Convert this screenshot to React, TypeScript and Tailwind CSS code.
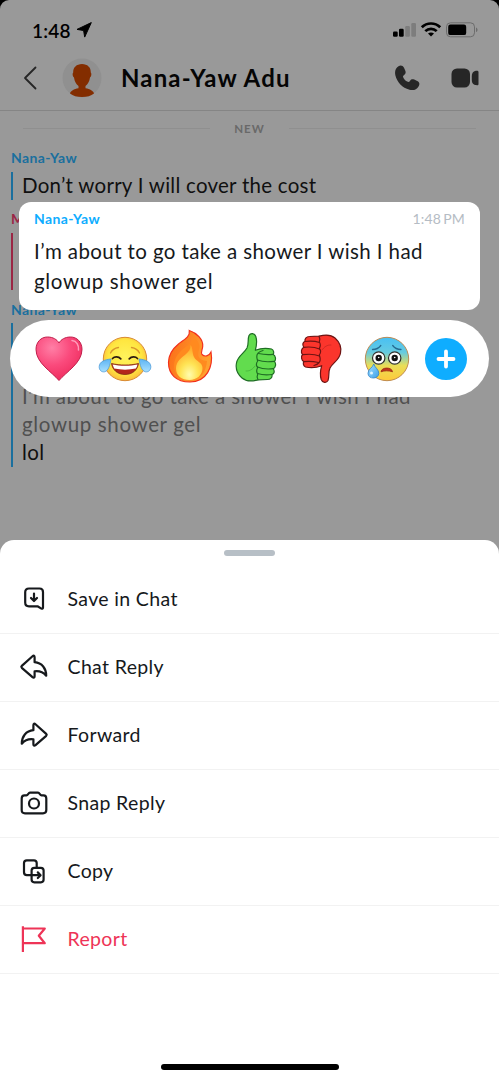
import { ReactNode } from "react";

type Action = { label: string; icon: ReactNode; danger?: boolean };

const HeartEmoji = () => (
  <svg viewBox="0 0 54 60" className="w-[54px] h-[60px]">
    <defs>
      <radialGradient id="heart" cx="0.35" cy="0.25" r="0.8">
        <stop offset="0" stopColor="#ff7fa6" />
        <stop offset="0.5" stopColor="#fa4a7c" />
        <stop offset="1" stopColor="#ee2a5c" />
      </radialGradient>
    </defs>
    <path
      d="M27 52.500C20 44 4 35 4 21.500C4 14 9 9 15.500 9C21 9 25 11.500 27 15C29 11.500 33 9 38.500 9C45 9 50 14 50 21.500C50 35 34 44 27 52.500Z"
      fill="url(#heart)"
      stroke="#c01f4b"
      strokeWidth="1"
    />
    <path d="M40 12.500C44.500 13 47 17 46.500 22" fill="none" stroke="#ff9cba" strokeWidth="1.500" strokeLinecap="round" />
  </svg>
);

const JoyEmoji = () => (
  <svg viewBox="0 0 54 60" className="w-[54px] h-[60px]">
    <defs>
      <radialGradient id="joy" cx="0.5" cy="0.45" r="0.55">
        <stop offset="0" stopColor="#fff35c" />
        <stop offset="0.7" stopColor="#ffe640" />
        <stop offset="1" stopColor="#fbbd3c" />
      </radialGradient>
      <linearGradient id="tear" x1="0" y1="0" x2="0" y2="1">
        <stop offset="0" stopColor="#5db4f3" />
        <stop offset="1" stopColor="#a8e0ff" />
      </linearGradient>
    </defs>
    <circle cx="27" cy="31" r="21.700" fill="url(#joy)" stroke="#d98a32" />
    <g fill="none" stroke="#d9962b" strokeWidth="1.300" strokeLinecap="round">
      <path d="M12.500 25C14 22 17 20 20.500 19.500" />
      <path d="M41.500 25C40 22 37 20 33.500 19.500" />
    </g>
    <g fill="none" stroke="#2e1a10" strokeWidth="1.700" strokeLinecap="round">
      <path d="M14.500 30.500C16.500 28.300 20.500 28.300 22.800 30.800" />
      <path d="M39.500 30.500C37.500 28.300 33.500 28.300 31.200 30.800" />
    </g>
    <path d="M13.500 35.500C22 37.500 32 37.500 40.500 35.500C39.500 42 34.500 46.500 27 46.500C19.500 46.500 14.500 42 13.500 35.500Z" fill="#b3261c" stroke="#7d2a14" strokeWidth="0.800" />
    <path d="M14.500 36.500C22 38.300 32 38.300 39.500 36.500C39 38.500 38.500 39.500 37.800 40.500C31 42 23 42 16.200 40.500Z" fill="#fff" />
    <path d="M13 31C7 31.500 1.500 33.500 1.200 38.500C1 42 3.500 44.300 6.500 43.800C10.500 43 12 37 13 31Z" fill="url(#tear)" stroke="#4d9bd9" strokeWidth="0.800" />
    <path d="M41 31C47 31.500 52.500 33.500 52.800 38.500C53 42 50.500 44.300 47.500 43.800C43.500 43 42 37 41 31Z" fill="url(#tear)" stroke="#4d9bd9" strokeWidth="0.800" />
  </svg>
);

const FireEmoji = () => (
  <svg viewBox="0 0 54 60" className="w-[54px] h-[60px]">
    <defs>
      <linearGradient id="flame" x1="0" y1="0" x2="1" y2="0.3">
        <stop offset="0" stopColor="#fb6a17" />
        <stop offset="1" stopColor="#ffa02e" />
      </linearGradient>
      <radialGradient id="core" cx="0.5" cy="0.85" r="0.75">
        <stop offset="0" stopColor="#fffcae" />
        <stop offset="0.45" stopColor="#ffe354" />
        <stop offset="1" stopColor="#ffab2c" />
      </radialGradient>
    </defs>
    <path
      d="M26.300 2.500C34 5 40.500 11.500 39.700 18.500C39.300 22 37.500 24.500 39 26.500C41.500 29 46 28.500 48 24C50.500 39 43.500 54 27 54C13 54 5.500 46 5.500 34.500C5.500 26.500 10 20.500 15.500 16C20.500 12 27.500 9 26.300 2.500Z"
      fill="url(#flame)"
      stroke="#f2301c"
      strokeWidth="1.200"
    />
    <path d="M11 38C11 29 17 23 24 18C28 15 29.500 12 30 9C35 12 37.500 17 36 21.500C34 28 35 32 44 33C43 44 38 51.500 27 51.500C17 51.500 11 46 11 38Z" fill="#ff8a1f" />
    <path d="M27.500 17C30 20 29 25 31 29C33.500 34 39.500 34 39.500 40C39.500 47 34 52 26.500 52C18.500 52 13 47.500 13 40.500C13 33 18.500 30 22.500 26.500C26 23.500 27.800 21 27.500 17Z" fill="url(#core)" />
  </svg>
);

function ThumbEmoji(props: { down?: boolean }) {
  const { down } = props;
  const fill = down ? "#fb352c" : "#62dc4e";
  const line = down ? "#6d1413" : "#1f6d24";
  return (
    <svg viewBox="0 0 54 60" className={down ? "w-[54px] h-[60px] rotate-180" : "w-[54px] h-[60px]"}>
      <g fill={fill} stroke={line} strokeWidth="1.200" strokeLinejoin="round" strokeLinecap="round">
        <path d="M20 7.500C21.500 4.800 25.500 5 26.800 8.500C28.300 13 27.500 18 26.300 22.300C32 20 38 20 42.500 21C45 22 45 25 44.200 26.500C46.500 27.500 47.300 31.500 45.500 33.500C47.500 36 46.500 39.500 44.300 40.800C46 43.500 45 46 43 46.500C43.500 49.500 41.500 51.500 38.500 51.500L29 51.800C23 53.500 17 53.500 13 50C8.500 46 6.500 40 7.500 35C8.500 28 15 25.500 18 20C20 16 18.500 11 20 7.500Z" />
        <path d="M29.500 25.500C34 26.500 40 26.800 44 26.300" fill="none" />
        <path d="M28.500 32C33 33.800 40 34 45.300 33.300" fill="none" />
        <path d="M28.500 39C33 41 39 41.300 44.300 40.700" fill="none" />
        <path d="M28.500 45.500C33 47 38 47.200 43 46.500" fill="none" />
        <path d="M34 22.500C30.500 23.500 27.500 26 27.800 29C28 31 28.300 31.500 28.700 33C26.800 35.500 27 37.500 28.700 39.500C27.300 42 27.300 44 28.700 46C27.800 48 28 50 29 51.800" fill="none" />
        <path d="M17 43C20.500 43.500 24 41 26 38" fill="none" strokeWidth="0.600" opacity="0.500" />
      </g>
    </svg>
  );
}

const AnxiousEmoji = () => (
  <svg viewBox="0 0 54 60" className="w-[54px] h-[60px]">
    <defs>
      <linearGradient id="anxious" x1="0" y1="0" x2="0" y2="1">
        <stop offset="0" stopColor="#48c0f4" />
        <stop offset="0.350" stopColor="#66cbe0" />
        <stop offset="0.650" stopColor="#e9de57" />
        <stop offset="1" stopColor="#ffc93a" />
      </linearGradient>
      <linearGradient id="drop" x1="0" y1="0" x2="1" y2="1">
        <stop offset="0" stopColor="#a5e0ff" />
        <stop offset="1" stopColor="#3b9fe8" />
      </linearGradient>
    </defs>
    <circle cx="27" cy="31" r="21.700" fill="url(#anxious)" stroke="#b98145" strokeWidth="0.900" />
    <g fill="none" stroke="#266a91" strokeWidth="1.300" strokeLinecap="round">
      <path d="M12.500 21.500C16 21.500 19 20 20.800 17.500" />
      <path d="M41 21.500C37.500 21.500 34.500 20 32.700 17.500" />
    </g>
    <g fill="#fff" stroke="#30312e" strokeWidth="1.200">
      <circle cx="18.700" cy="30" r="6.200" />
      <circle cx="34.700" cy="30" r="6.200" />
    </g>
    <circle cx="18.700" cy="30" r="3.200" fill="#111" />
    <circle cx="34.700" cy="30" r="3.200" fill="#111" />
    <circle cx="18.700" cy="29.500" r="0.800" fill="#fff" />
    <circle cx="34.700" cy="29.500" r="0.800" fill="#fff" />
    <path d="M21 43.800C21.500 38.800 32 38.800 32.500 43.800C29 42.500 24.500 42.500 21 43.800Z" fill="#c0361d" stroke="#992913" strokeWidth="0.800" strokeLinejoin="round" />
    <path d="M13.800 36C15 40 19 41.500 18.800 45.500C18.600 48.300 16.300 50 13.300 50C10.300 50 8 48.300 8 45.300C8 41 12.500 40 13.800 36Z" fill="url(#drop)" stroke="#2e83c9" strokeWidth="0.800" />
    <circle cx="11.500" cy="45" r="1.500" fill="#e2f6ff" />
  </svg>
);

const reactions = [
  <HeartEmoji />,
  <JoyEmoji />,
  <FireEmoji />,
  <ThumbEmoji />,
  <ThumbEmoji down />,
  <AnxiousEmoji />,
];

function ActionIcon(props: { children: ReactNode }) {
  return (
    <svg
      viewBox="0 0 30 30"
      className="w-[30px] h-[30px]"
      fill="none"
      stroke="currentColor"
      strokeWidth="2.200"
      strokeLinejoin="round"
      strokeLinecap="round"
    >
      {props.children}
    </svg>
  );
}

const actions: Action[] = [
  {
    label: "Save in Chat",
    icon: (
      <ActionIcon>
        <path d="M10 4.500H20.500C22.700 4.500 24 5.800 24 8V23.500C24 24.600 23.300 25 22.400 24.600L18.500 22.300H10C7.500 22.300 6.200 21 6.200 18.500V8.300C6.200 5.800 7.500 4.500 10 4.500Z" />
        <path d="M15 9.500V16.800M12 14L15 17L18 14" />
      </ActionIcon>
    ),
  },
  {
    label: "Chat Reply",
    icon: (
      <ActionIcon>
        <path d="M13.500 4.300L2.800 13.900C2.200 14.500 2.200 15.200 2.800 15.800L13.500 25.200C14.700 26.200 15.600 25.600 15.600 24.300V19.300C20.500 18.700 24.500 20.500 27.200 23.700C27.300 16.500 23 10.800 15.600 10.200V5.200C15.600 3.700 14.700 3.200 13.500 4.300Z" />
      </ActionIcon>
    ),
  },
  {
    label: "Forward",
    icon: (
      <ActionIcon>
        <path d="M16.500 4.300L27.200 13.900C27.800 14.500 27.800 15.200 27.200 15.800L16.500 25.200C15.300 26.200 14.400 25.600 14.400 24.300V19.300C9.500 18.700 5.500 20.500 2.800 23.700C2.700 16.500 7 10.800 14.400 10.200V5.200C14.400 3.700 15.300 3.200 16.500 4.300Z" />
      </ActionIcon>
    ),
  },
  {
    label: "Snap Reply",
    icon: (
      <ActionIcon>
        <path d="M5.500 7.300H7.500C9 7.300 9.300 4.600 11 4.600H19C20.700 4.600 21 7.300 22.500 7.300H24.500C26.500 7.300 27.300 8.500 27.300 10.500V22C27.300 24.300 26.300 25.300 24 25.300H6C3.700 25.300 2.700 24.300 2.700 22V10.500C2.700 8.500 3.500 7.300 5.500 7.300Z" />
        <circle cx="15" cy="15.500" r="5" />
      </ActionIcon>
    ),
  },
  {
    label: "Copy",
    icon: (
      <ActionIcon>
        <path d="M17.700 11.300V7C17.700 5.300 16.700 4.300 15 4.300H7.800C6.100 4.300 5 5.300 5 7V16.300C5 18.100 6.100 19.200 7.800 19.200H20.800" />
        <rect x="12.600" y="11.800" width="12" height="14.500" rx="2.700" />
        <path d="M18.800 16.400L21.600 19.200L18.800 22" />
      </ActionIcon>
    ),
  },
  {
    label: "Report",
    danger: true,
    icon: (
      <ActionIcon>
        <path d="M3.900 2.300V28M3.900 4.500H25.800L19.800 11.800L25.800 19.200H3.900" strokeLinecap="butt" strokeLinejoin="round" />
      </ActionIcon>
    ),
  },
];

function StatusBar() {
  return (
    <div className="h-[50px] pt-[10px] pl-8 pr-[20px] flex items-center justify-between text-black">
      <div className="flex items-center">
        <span className="w-[40px] text-[19px] leading-none font-semibold tracking-[0.200px] whitespace-nowrap">1:48</span>
        <svg viewBox="0 0 16 16" className="w-4 h-4 ml-1">
          <path d="M15.300 0.600L8.700 15.100L7.600 8.500L1 7.400Z" fill="#000" stroke="#000" strokeLinejoin="round" />
        </svg>
      </div>
      <svg viewBox="0 0 87 18" className="w-[87px] h-[18px]">
        <rect x="1" y="10.500" width="4.700" height="5.300" rx="1.200" />
        <rect x="7" y="7.800" width="4.700" height="8" rx="1.200" />
        <rect x="13.200" y="5" width="4.700" height="10.800" rx="1.200" fill="#7d7d7d" />
        <rect x="19.300" y="2" width="4.700" height="13.800" rx="1.200" fill="#7d7d7d" />
        <g fill="none" stroke="#000" strokeWidth="2.700">
          <path d="M29.800 6.300C35 1.200 43 1.200 48.200 6.300" />
          <path d="M33.300 10.100C36.500 7 41.500 7 44.700 10.100" />
        </g>
        <path d="M39 15.600L36 12.600C37.600 11.100 40.400 11.100 42 12.600Z" />
        <rect x="54.500" y="1.800" width="28" height="14" rx="4" fill="none" stroke="#6c6c6c" />
        <rect x="56.200" y="3.500" width="18" height="10.600" rx="2.200" />
        <path d="M84 6.500C86 7.300 86 10.300 84 11.100Z" fill="#6c6c6c" />
      </svg>
    </div>
  );
}

function ChatHeader() {
  return (
    <div className="h-[61px] pb-[5px] border-b border-[#858585] flex items-center">
      <svg viewBox="0 0 14 24" className="w-[14px] h-6 ml-[23px]" fill="none" stroke="#262626" strokeWidth="1.800">
        <path d="M12.500 1.500L2 12L12.500 22.500" strokeLinecap="round" strokeLinejoin="round" />
      </svg>
      <svg viewBox="0 0 40 40" className="w-10 h-10 ml-[25px]">
        <circle cx="20" cy="20" r="19.500" fill="#909090" />
        <path
          d="M20 6C25.500 6 29 9.500 28.800 14.500C29.800 15.500 29.500 18.500 28 19.500C27.500 23.500 25.800 26 23.500 28V30.300C28 31 31.500 33 32 35.500C29 38 25 39 20 39C15 39 11 38 8 35.500C8.500 33 12 31 16.500 30.300V28C14.200 26 12.500 23.500 12 19.500C10.500 18.500 10.200 15.500 11.200 14.500C11 9.500 14.500 6 20 6Z"
          fill="#832d00"
        />
      </svg>
      <h1 className="ml-[19px] text-[24px] leading-none font-bold tracking-[1.150px] text-[#050505] whitespace-nowrap">
        Nana-Yaw Adu
      </h1>
      <svg viewBox="0 0 26 26" className="w-[26px] h-[26px] ml-auto" fill="#262626">
        <path d="M4.500 1.200C6.500 -0.200 8.800 0.400 10 2.800L11.300 5.800C12 7.500 11.600 8.900 10.200 9.900C8.800 10.900 8.700 11.600 9.500 12.900C10.600 14.600 11.700 15.700 13.200 16.500C14.500 17.200 15.200 17 16.100 15.700C17.100 14.300 18.500 13.900 20.200 14.600L23.200 16C25.500 17.100 25.900 19 24.700 21.200C22.700 24.800 19.300 25.700 15.500 24.700C8.300 22.600 3.200 17.300 1.400 10.400C0.500 6.600 1.400 3.300 4.500 1.200Z" />
      </svg>
      <svg viewBox="0 0 28 20" className="w-7 h-5 ml-[31px] mr-5" fill="#262626">
        <rect x="0.500" y="0.500" width="18.500" height="19" rx="5.500" />
        <path d="M20.800 8C20.800 4.500 23 2.800 26 2.800C27 2.800 27.500 3.300 27.500 4.300V15.700C27.500 16.700 27 17.200 26 17.200C23 17.200 20.800 15.500 20.800 12Z" />
      </svg>
    </div>
  );
}

function Conversation() {
  return (
    <div className="px-[11px]">
      <div className="h-[34px] pl-3 pr-3 flex items-center">
        <div className="h-px w-[187px] bg-[#8f8f8f]" />
        <span className="flex-1 pt-px text-center text-[11.500px] font-bold tracking-[1px] text-[#696969]">NEW</span>
        <div className="h-px w-[187px] bg-[#8f8f8f]" />
      </div>
      <p className="mt-[4px] h-[17px] text-[14px] leading-[17px] font-bold tracking-[0.400px] text-[#1a6f9e]">Nana-Yaw</p>
      <div className="mt-[6px] h-7 border-l-[2.500px] border-[#1a6f9e] pl-[9px] text-[20.500px] leading-[26px] tracking-[0.260px] text-[#101010]">
        Don’t worry I will cover the cost
      </div>
      <p className="mt-[10px] h-[17px] text-[14px] leading-[17px] font-bold tracking-[0.400px] text-[#9b2645]">ME</p>
      <div className="mt-[6px] h-[57px] border-l-[2.500px] border-[#9b2645]" />
      <p className="mt-[11px] h-[17px] text-[14px] leading-[17px] font-bold tracking-[0.400px] text-[#1a6f9e]">Nana-Yaw</p>
      <div className="mt-[5px] h-[144px] pt-[59px] border-l-[2.500px] border-[#1a6f9e] pl-[9px] text-[20.500px] leading-[28px] tracking-[0.400px] text-[#505050]">
        <p className="whitespace-nowrap">I’m about to go take a shower I wish I had</p>
        <p className="tracking-[0.650px]">glowup shower gel</p>
        <p className="text-[#101010]">lol</p>
      </div>
    </div>
  );
}

function FocusedMessage() {
  return (
    <div className="absolute left-[19px] top-[202px] w-[461px] h-[108px] rounded-xl bg-white px-[15px] pt-[8px]">
      <div className="flex justify-between text-[14px] leading-[17px]">
        <span className="font-bold tracking-[0.400px] text-[#0eadff]">Nana-Yaw</span>
        <span className="tracking-[0.150px] [word-spacing:-1.500px] text-[#b5bcc4]">1:48 PM</span>
      </div>
      <div className="mt-[10px] text-[20.500px] leading-[29.500px] text-[#16191c] whitespace-nowrap">
        <p className="tracking-[0.400px]">I’m about to go take a shower I wish I had</p>
        <p className="tracking-[0.650px]">glowup shower gel</p>
      </div>
    </div>
  );
}

function ReactionBar() {
  return (
    <div className="absolute left-[10px] top-[320px] w-[479px] h-[77px] rounded-full bg-white pl-[16.500px] flex items-center">
      {reactions.map((emoji, i) => (
        <div key={i} className="w-[65.500px] pb-px flex justify-center">
          {emoji}
        </div>
      ))}
      <button className="ml-[5.500px] w-[42px] h-[42px] rounded-full bg-[#0fadff] flex items-center justify-center">
        <svg viewBox="0 0 20 20" className="w-5 h-5" stroke="#fff" strokeWidth="3.800" strokeLinecap="round">
          <path d="M10 2.500V17.500M2.500 10H17.500" />
        </svg>
      </button>
    </div>
  );
}

function ActionSheet() {
  return (
    <div className="flex-1 flex flex-col rounded-t-[14px] bg-white">
      <div className="mt-[9.500px] w-[51px] h-[6px] rounded-full bg-[#b7bfc6] mx-auto" />
      <ul className="mt-[10.500px]">
        {actions.map((action) => (
          <li
            key={action.label}
            className={
              "h-[68px] pl-[19px] pb-px border-b border-[#f2f2f2] flex items-center " +
              (action.danger ? "text-[#ee3457]" : "text-[#16191c]")
            }
          >
            {action.icon}
            <span className="ml-[18.500px] pb-px text-[19.500px] leading-none tracking-[0.350px]">{action.label}</span>
          </li>
        ))}
      </ul>
      <div className="mt-auto mb-[10px] w-[178px] h-[6px] rounded-full bg-black mx-auto" />
    </div>
  );
}

export default function App() {
  return (
    <div className="bg-black w-[499px] h-[1080px] overflow-hidden font-['Lato','Noto_Sans',sans-serif]">
      <div className="relative h-full flex flex-col rounded-t-[9px] bg-[#999999]">
        <div className="h-[540px]">
          <StatusBar />
          <ChatHeader />
          <Conversation />
        </div>
        <ActionSheet />
        <FocusedMessage />
        <ReactionBar />
      </div>
    </div>
  );
}
